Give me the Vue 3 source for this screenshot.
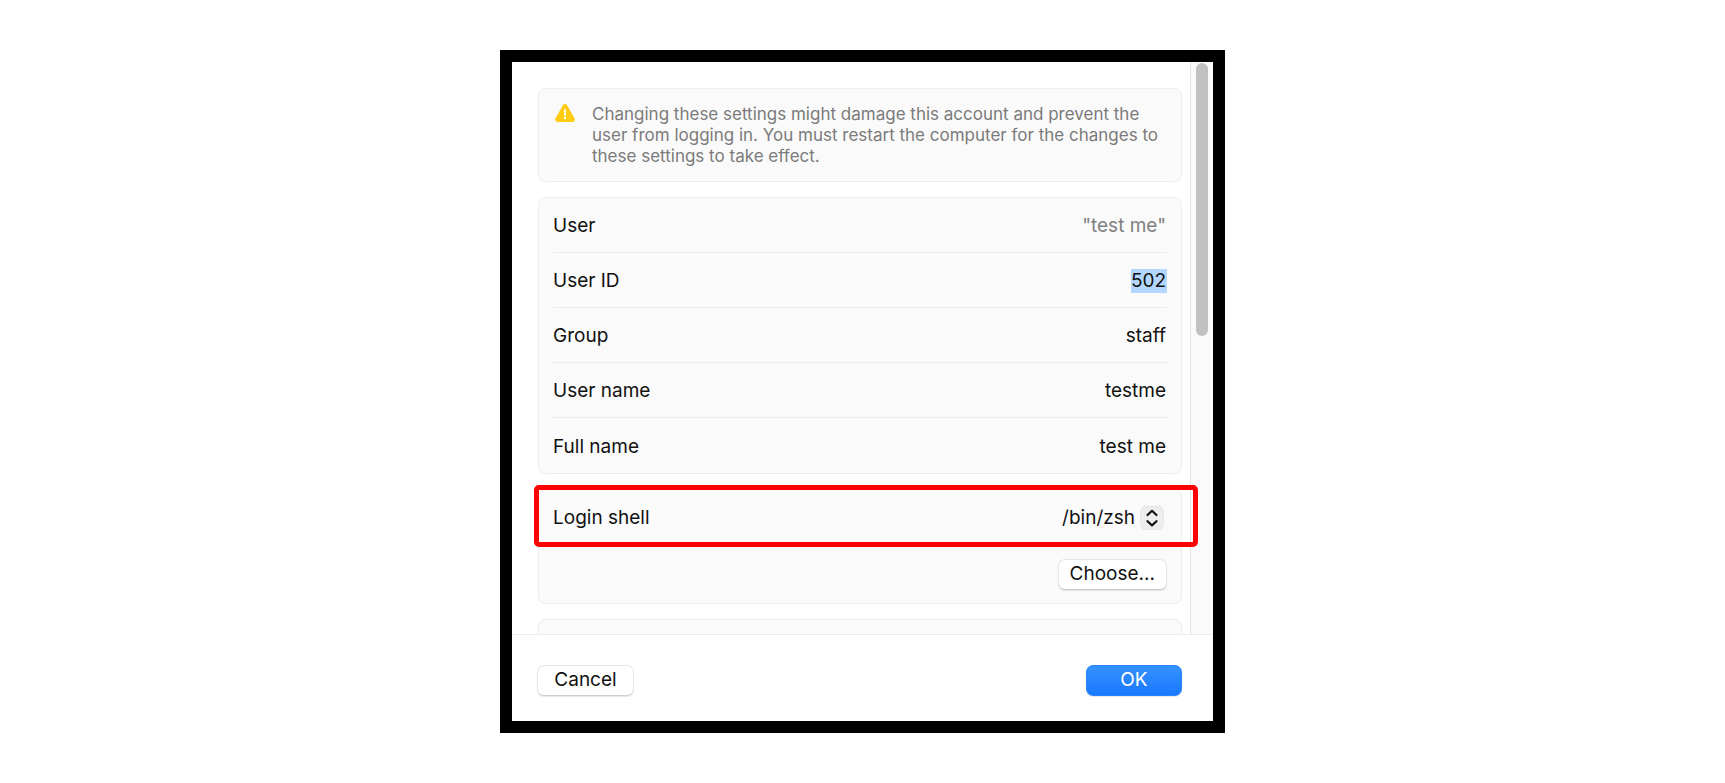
<script setup>
import { ref } from 'vue'

const user = '"test me"'
const fields = ref([
  { id: 'uid', label: 'User ID', value: '502', selected: true },
  { id: 'group', label: 'Group', value: 'staff' },
  { id: 'username', label: 'User name', value: 'testme' },
  { id: 'fullname', label: 'Full name', value: 'test me' },
])
const shells = ['/bin/zsh', '/bin/bash', '/bin/sh']
const shell = ref('/bin/zsh')
</script>

<template>
  <main class="page">
    <form class="dialog" @submit.prevent>
      <div class="body">
        <div class="content">
          <section class="card notice">
            <svg class="warn" viewBox="0 0 20 18" aria-hidden="true">
              <path d="M7.9 1.3a2.4 2.4 0 0 1 4.2 0l7.5 13.2a2.3 2.3 0 0 1-2 3.5H2.4a2.3 2.3 0 0 1-2-3.5z" fill="#ffcc12" />
              <path d="M10 5.8v5.2" stroke="#fff" stroke-width="1.8" stroke-linecap="round" />
              <circle cx="10" cy="14" r="1.2" fill="#fff" />
            </svg>
            <p>Changing these settings might damage this account and prevent the user from logging in. You must restart the computer for the changes to these settings to take effect.</p>
          </section>

          <section class="card rows">
            <div class="row">
              <span>User</span>
              <span class="muted">{{ user }}</span>
            </div>
            <div v-for="f in fields" :key="f.id" class="row">
              <label :for="f.id">{{ f.label }}</label>
              <input :id="f.id" v-model="f.value" type="text" :class="{ selected: f.selected }" />
            </div>
          </section>

          <section class="card shell">
            <div class="shell-row">
              <label for="shell">Login shell</label>
              <div class="popup">
                <select id="shell" v-model="shell">
                  <option v-for="s in shells" :key="s">{{ s }}</option>
                </select>
                <svg class="stepper" viewBox="0 0 24 24" aria-hidden="true">
                  <rect x="0.5" y="0.5" width="23" height="23" rx="5" fill="#ededed" stroke="#e6e6e6" />
                  <path d="M7.5 9l4.5-4.2L16.5 9M7.5 15.2l4.5 4.2 4.5-4.2" fill="none" stroke="#111" stroke-width="2.2" stroke-linecap="round" stroke-linejoin="round" />
                </svg>
              </div>
            </div>
            <button type="button" class="btn choose">Choose...</button>
            <div class="highlight"></div>
          </section>

          <section class="card next"></section>
        </div>
        <div class="track"><div class="thumb"></div></div>
      </div>
      <footer class="footer">
        <button type="button" class="btn">Cancel</button>
        <button type="submit" class="btn primary">OK</button>
      </footer>
    </form>
  </main>
</template>

<style>
body {
  background: #fff;
}
</style>

<style scoped>
.page {
  box-sizing: border-box;
  height: 100vh;
  padding: 50px 20px;
  display: flex;
  justify-content: center;
  font-family: Inter, "Liberation Sans", sans-serif;
  font-size: 19px;
  line-height: 24px;
  color: #111;
}
.dialog {
  box-sizing: border-box;
  width: 100%;
  max-width: 725px;
  border: 12px solid #000;
  background: #fff;
  display: flex;
  flex-direction: column;
}
.body {
  flex: 1;
  min-height: 0;
  overflow: hidden;
  display: flex;
  padding-right: 2px;
}
.content {
  flex: 1;
  min-width: 0;
  padding: 26px 8px 0 26px;
  display: flex;
  flex-direction: column;
  gap: 15px;
}
.card {
  flex-shrink: 0;
  border: 1px solid #ededed;
  border-radius: 7px;
  background: #fafafa;
}
.notice {
  display: flex;
  gap: 17px;
  padding: 15px 14px 14px 16px;
  font-size: 17px;
  line-height: 21px;
  color: #7b7b7b;
}
.notice p {
  margin: 0;
}
.warn {
  flex: none;
  width: 20px;
  height: 18px;
}
.rows {
  padding: 0 14px;
}
.row {
  box-sizing: border-box;
  height: 55px;
  padding-top: 2px;
  display: flex;
  align-items: center;
  justify-content: space-between;
  border-bottom: 1px solid #ebebeb;
}
.row:last-child {
  border-bottom: 0;
}
.muted {
  color: #808080;
  padding-right: 1px;
}
input,
select,
button {
  font: inherit;
  color: inherit;
}
input {
  width: 240px;
  height: 24px;
  padding: 0 1px 0 0;
  border: 0;
  background: none;
  text-align: right;
  outline: 0;
}
input.selected {
  width: 36px;
  box-sizing: border-box;
  background: #b3d7ff;
}
.shell {
  position: relative;
  padding: 0 14px 13px;
  display: flex;
  flex-direction: column;
}
.shell-row {
  height: 55px;
  display: flex;
  align-items: center;
  justify-content: space-between;
}
.popup {
  position: relative;
  display: flex;
  align-items: center;
}
select {
  appearance: none;
  border: 0;
  background: none;
  outline: 0;
  padding: 0 32px 0 0;
  text-align: right;
}
.stepper {
  position: absolute;
  right: 3px;
  width: 24px;
  height: 24px;
  pointer-events: none;
}
.btn {
  box-sizing: border-box;
  height: 31px;
  min-width: 97px;
  padding: 0 11px 2px;
  border: 1px solid #e6e6e6;
  border-bottom-color: #cfcfcf;
  border-radius: 7px;
  background: #fff;
  box-shadow: 0 1px 1px rgba(0, 0, 0, 0.1);
  line-height: 26px;
}
.choose {
  align-self: flex-end;
  margin-top: 14px;
}
.primary {
  min-width: 96px;
  border: 1px solid #2a84ff;
  background: linear-gradient(#3492ff, #1a78ff);
  color: #fff;
}
.highlight {
  position: absolute;
  z-index: 1;
  top: -5px;
  left: -5px;
  right: -17px;
  height: 52px;
  border: 5px solid #f00;
  border-radius: 5px;
  pointer-events: none;
}
.next {
  height: 56px;
}
.track {
  width: 20px;
  border-left: 1px solid #e4e4e4;
  background: #fafafa;
}
.thumb {
  width: 12px;
  height: 273px;
  margin: 1px 0 0 5px;
  border-radius: 6px;
  background: #c1c1c1;
}
.footer {
  border-top: 1px solid #ececec;
  padding: 30px 31px 25px 25px;
  display: flex;
  justify-content: space-between;
}
</style>
